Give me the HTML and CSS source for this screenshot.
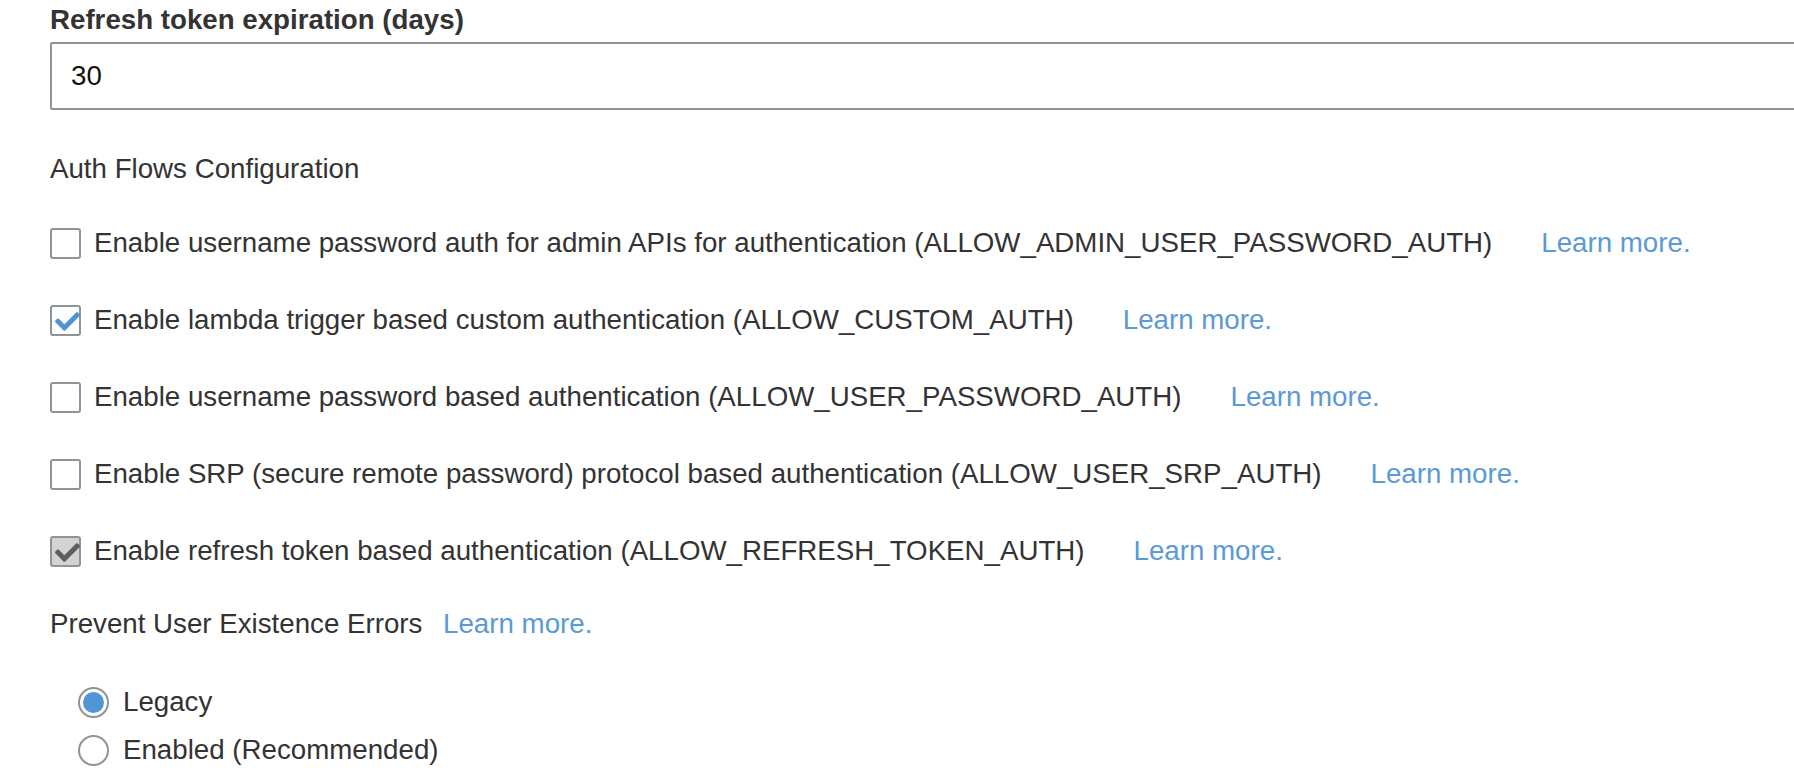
FILE: index.html
```html
<!DOCTYPE html>
<html lang="en">
<head>
    <meta charset="UTF-8">
    <title>App client settings</title>
    <link rel="stylesheet" href="styles.css">
</head>
<body>
    <div class="form">
        <label class="field-label" for="refreshDays">Refresh token expiration (days)</label>
        <input class="text-input" id="refreshDays" type="text" value="30">

        <div class="section-title">Auth Flows Configuration</div>

        <div class="flows">
            <div class="flow">
                <span class="box"></span>
                <span class="flow-text">Enable username password auth for admin APIs for authentication (ALLOW_ADMIN_USER_PASSWORD_AUTH)</span>
                <a class="learn" href="#">Learn more.</a>
            </div>
            <div class="flow">
                <span class="box">
                    <svg class="tick tick-on" viewBox="0 0 512 512"><path d="M173.9 439.4l-166.4-166.4c-10-10-10-26.2 0-36.2l36.2-36.2c10-10 26.2-10 36.2 0L192 312.7 432.1 72.6c10-10 26.2-10 36.2 0l36.2 36.2c10 10 10 26.2 0 36.2l-294.4 294.4c-10 10-26.2 10-36.2 0z"/></svg>
                </span>
                <span class="flow-text">Enable lambda trigger based custom authentication (ALLOW_CUSTOM_AUTH)</span>
                <a class="learn" href="#">Learn more.</a>
            </div>
            <div class="flow">
                <span class="box"></span>
                <span class="flow-text">Enable username password based authentication (ALLOW_USER_PASSWORD_AUTH)</span>
                <a class="learn" href="#">Learn more.</a>
            </div>
            <div class="flow">
                <span class="box"></span>
                <span class="flow-text">Enable SRP (secure remote password) protocol based authentication (ALLOW_USER_SRP_AUTH)</span>
                <a class="learn" href="#">Learn more.</a>
            </div>
            <div class="flow">
                <span class="box box-disabled">
                    <svg class="tick tick-off" viewBox="0 0 512 512"><path d="M173.9 439.4l-166.4-166.4c-10-10-10-26.2 0-36.2l36.2-36.2c10-10 26.2-10 36.2 0L192 312.7 432.1 72.6c10-10 26.2-10 36.2 0l36.2 36.2c10 10 10 26.2 0 36.2l-294.4 294.4c-10 10-26.2 10-36.2 0z"/></svg>
                </span>
                <span class="flow-text">Enable refresh token based authentication (ALLOW_REFRESH_TOKEN_AUTH)</span>
                <a class="learn" href="#">Learn more.</a>
            </div>
        </div>

        <div class="section-title prevent">
            Prevent User Existence Errors
            <a class="learn learn-near" href="#">Learn more.</a>
        </div>

        <div class="radios">
            <div class="radio-row">
                <span class="radio radio-on"><span class="dot"></span></span>
                <span>Legacy</span>
            </div>
            <div class="radio-row">
                <span class="radio"></span>
                <span>Enabled (Recommended)</span>
            </div>
        </div>
    </div>
</body>
</html>
```

FILE: styles.css
```css
body {
    margin: 0;
    overflow: hidden;
    background: #ffffff;
    font-family: "Liberation Sans", Arial, sans-serif;
    font-size: 27.7px;
    line-height: 34px;
    color: #333333;
}
.form {
    display: flex;
    flex-direction: column;
    padding: 3px 0 0 50px;
}
.field-label {
    font-weight: bold;
    color: #333333;
}
.text-input {
    box-sizing: border-box;
    width: calc(100% + 40px);
    height: 68px;
    margin-top: 5px;
    padding: 0 19px;
    border: 2px solid #8f9498;
    border-radius: 2px;
    font-family: "Liberation Sans", Arial, sans-serif;
    font-size: 27.7px;
    color: #111111;
    outline: none;
}
.section-title {
    margin-top: 42px;
}
.flows {
    display: flex;
    flex-direction: column;
    gap: 43px;
    margin-top: 40px;
}
.flow {
    display: flex;
    align-items: center;
}
.box {
    box-sizing: border-box;
    width: 31px;
    height: 31px;
    flex-shrink: 0;
    border: 2px solid #8f9498;
    border-radius: 3px;
    background: #ffffff;
    display: flex;
    align-items: center;
    justify-content: center;
    margin-right: 13px;
}
.box-disabled {
    background: #d3d3d3;
}
.tick {
    width: 25px;
    height: 25px;
    margin: 2px -4px 0 0;
}
.tick-on {
    fill: #4f95d6;
}
.tick-off {
    fill: #5e5e5e;
}
.learn {
    margin-left: 49px;
    color: #5a9ad6;
    text-decoration: none;
}
.learn-near {
    margin-left: 13px;
}
.prevent {
    margin-top: 39px;
}
.radios {
    display: flex;
    flex-direction: column;
    gap: 14px;
    margin: 44px 0 0 28px;
}
.radio-row {
    display: flex;
    align-items: center;
}
.radio {
    box-sizing: border-box;
    width: 31px;
    height: 31px;
    border: 2px solid #8f9498;
    border-radius: 50%;
    display: flex;
    align-items: center;
    justify-content: center;
    margin-right: 14px;
}
.dot {
    width: 21px;
    height: 21px;
    border-radius: 50%;
    background: #5096d7;
}
```
